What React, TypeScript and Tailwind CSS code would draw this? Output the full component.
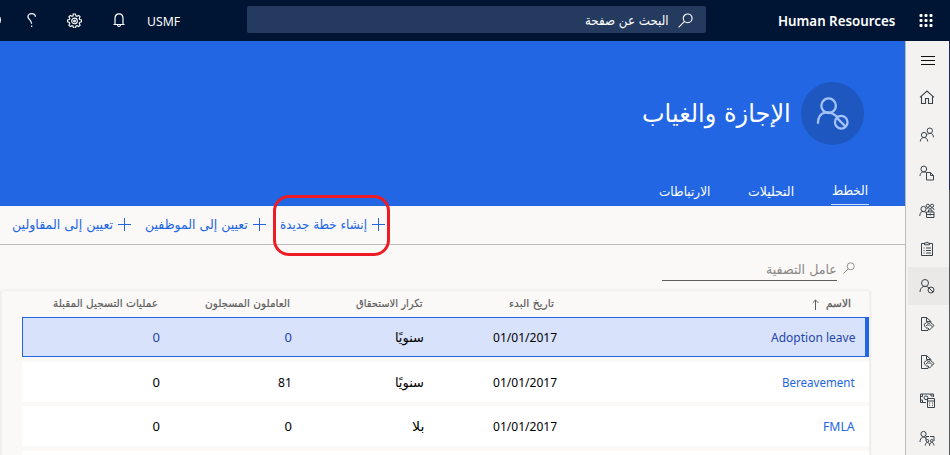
import { useLayoutEffect, useRef, useState } from 'react';
import type { ReactNode } from 'react';

const AR = "font-['DejaVu_Sans',sans-serif]";
const LAT = "font-['Noto_Sans','Open_Sans',sans-serif]";

/** Single line of text, condensed or widened to fill the given width. */
function Fit({ w, className = '', children }: { w: number; className?: string; children: ReactNode }) {
  const ref = useRef<HTMLSpanElement>(null);
  const [k, setK] = useState(1);
  useLayoutEffect(() => {
    const measure = () => {
      if (ref.current && ref.current.offsetWidth) setK(w / ref.current.offsetWidth);
    };
    measure();
    document.fonts?.ready.then(measure);
  }, [w]);
  return (
    <span className={`flex shrink-0 justify-start ${className}`} style={{ width: w }}>
      <span ref={ref} className="inline-block shrink-0 origin-right whitespace-nowrap" style={{ transform: `scaleX(${k})` }}>
        {children}
      </span>
    </span>
  );
}

function Svg({ className = 'size-4', box = '0 0 16 16', sw = 1, children }: { className?: string; box?: string; sw?: number; children: ReactNode }) {
  return (
    <svg className={`block shrink-0 ${className}`} viewBox={box} fill="none" stroke="currentColor" strokeWidth={sw}>
      {children}
    </svg>
  );
}

const Search = ({ className }: { className: string }) => (
  <Svg className={className} sw={1.200}>
    <circle cx="10.3" cy="5.7" r="4.7" />
    <path d="M7 9 .6 15.4" />
  </Svg>
);

const Doc = () => (
  <Svg>
    <path d="M9 14.500H2.500v-13h5l4.500 4v1M7.500 1.500v4h4" />
    <path d="m5 8.500 2.500-2 2.500 1 1.500-1 3.500 3-4.500 4.500-1.500-.5-3-3zM7 10l2-1.500 1 1 1-1 2.500 2.500M8.500 11.500l1.500 1.500" />
  </Svg>
);

const nav: { icon: ReactNode; active?: boolean }[] = [
  { icon: <Svg sw={1.100}><path d="M1 8.300 8 2l7 6.300M2.500 7.500v7h4v-5h3v5h4v-7" /></Svg> },
  {
    icon: (
      <Svg>
        <circle cx="5" cy="8" r="2.600" /><path d="M1.300 14.500c0-5.300 7.400-5.300 7.400 0" />
        <circle cx="10.800" cy="3.700" r="2.700" /><path d="M8.300 7.300c3-2 6.200-.5 6.200 3" />
      </Svg>
    ),
  },
  {
    icon: (
      <Svg>
        <circle cx="4.800" cy="4" r="2.900" /><path d="M1 11c0-4.500 4.500-5 6.500-3M7.500 7.500h4l3 3v4.500h-7zM11.500 7.500v3h3" />
      </Svg>
    ),
  },
  {
    icon: (
      <Svg>
        <circle cx="4.500" cy="6" r="2.600" /><path d="M.8 13c0-5 4-5.500 6-3.500" />
        <circle cx="8.800" cy="2.800" r="1.600" /><circle cx="13" cy="2.800" r="1.600" />
        <path d="M7.500 6c1.500-2 3-1 3.500 0 1-1.500 4-1.500 4 1M7.500 9h7.500v5.500H7.500zM9.500 9V7h3.500v2M7.500 11.500h7.500M11.300 10.500v2" />
      </Svg>
    ),
  },
  {
    icon: (
      <Svg>
        <path d="M5 2.500H2.500v12h11v-12H11M5.500 3.800V2h1.800c0-1.300 1.400-1.300 1.400 0h1.800v1.800zM4.500 7h1M7 7h5M4.500 9.500h1M7 9.500h5M4.500 12h1M7 12h5" />
      </Svg>
    ),
  },
  {
    active: true,
    icon: (
      <Svg>
        <circle cx="6" cy="5" r="3.500" /><path d="M1 14c0-6 6-7 9-4" />
        <circle cx="12" cy="12" r="3" /><path d="m10 10 4 4" />
      </Svg>
    ),
  },
  { icon: <Doc /> },
  { icon: <Doc /> },
  {
    icon: (
      <Svg>
        <path d="M7 10.500H1.500v-8.500h13V5M1.500 4.500H3.500V2M1.500 8h2v2.500M12 2v2h2.500" /><circle cx="7" cy="5.800" r="1.900" />
        <path d="M8.500 6.500h7v9h-7zM8.500 9h7M10.500 10.500v1M13.500 10.500v1M10.500 12.700v1M13.500 12.700v1" />
      </Svg>
    ),
  },
  {
    icon: (
      <Svg>
        <circle cx="4.500" cy="4" r="2.600" /><path d="M1 12c0-5 4-6 6-3.500M7 10.500v-4h3M11 6.500h4v4.500" />
        <circle cx="8.500" cy="10.800" r="1.300" /><circle cx="12.800" cy="10.800" r="1.300" />
        <path d="M6.300 15.500c0-4 4.300-4 4.300 0 0-4 4.300-4 4.300 0" />
      </Svg>
    ),
  },
];

const rows = [
  { name: 'Adoption leave', w: 84, freq: 'سنويًا', fw: 29, enrolled: '0', ew: 7, selected: true },
  { name: 'Bereavement', w: 73, freq: 'سنويًا', fw: 29, enrolled: '81', ew: 14, selected: false },
  { name: 'FMLA', w: 32, freq: 'بلا', fw: 12, enrolled: '0', ew: 7, selected: false },
];

const Plus = () => (
  <Svg className="size-[13px]" box="0 0 13 13"><path d="M6.500 0v13M0 6.500h13" /></Svg>
);

function Action({ label, w }: { label: string; w: number }) {
  return (
    <button className="flex items-center gap-[5px]">
      <span className="-mt-[2px]"><Plus /></span>
      <Fit w={w} className="text-[13px] leading-5">{label}</Fit>
    </button>
  );
}

export default function App() {
  return (
    <div dir="rtl" className={`flex h-[455px] w-[950px] flex-col overflow-hidden bg-[#faf9f8] text-black ${AR}`}>
      <header className="flex h-[41px] shrink-0 items-center overflow-hidden bg-[#001433] pb-px pr-[17px] text-white">
        <Svg className="h-[13px] w-[14px]" box="0 0 14 13">
          <g fill="currentColor" stroke="none">
            {[0, 5, 10].map((y) => [0.5, 5.500, 10.500].map((x) => <rect key={`${x}-${y}`} x={x} y={y} width="3" height="3" rx="1" />))}
          </g>
        </Svg>
        <Fit w={117} className={`mr-6 text-[14px] font-semibold ${LAT}`}>Human Resources</Fit>
        <div className="-mt-px mr-[72px] flex h-[27px] w-[459px] shrink-0 items-center rounded-[2px] bg-[#243a5e] pr-[13px]">
          <Search className="mt-[2px] size-[15px]" />
          <Fit w={84} className="mr-[9px] mt-[3px] text-[13px]">البحث عن صفحة</Fit>
        </div>
        <Fit w={33} className={`mr-[67px] mt-[3px] text-[13px] ${LAT}`}>USMF</Fit>
        <Svg className="mr-[22px] h-[15px] w-[12px]" box="0 0 12 15" sw={1.200}>
          <path d="M.5 11.500h11M2 11.500V5.500C2 -.7 10 -.7 10 5.500v6M4.500 12c.3 2 2.700 2 3 0" />
        </Svg>
        <Svg className="mr-[31px] size-[15px]" box="0 0 16 16" sw={1.200}>
          <path d="m6.600 1 .4 0h2l.5 2 1.200.5 1.800-1 1.500 1.500-1 1.800.5 1.200 2 .5v2l-2 .5-.5 1.200 1 1.800-1.500 1.500-1.800-1-1.200.5-.5 2H7l-.5-2-1.200-.5-1.800 1L2 13l1-1.800L2.500 10l-2-.5v-2l2-.5L3 5.800 2 4l1.500-1.500 1.800 1L6.500 3z" />
          <circle cx="8" cy="8.500" r="3" /><circle cx="8" cy="8.500" r="1" />
        </Svg>
        <Svg className="mr-[31px] h-[14px] w-[9px]" box="0 0 9 14" sw={1.300}>
          <path d="M8.400 3.700C8 -.3 1 -.3 1 3.700c0 3 3.600 3 3.600 7M4.600 12.500V14" />
        </Svg>
        <span className="mr-[26px] size-4 shrink-0 rounded-full border border-white" />
      </header>

      <div className="flex min-h-0 flex-1">
        <div className="flex w-px shrink-0 flex-col bg-[#53565c]">
          <div className="h-[149px] bg-[#1b2b57]" />
        </div>
        <nav className="flex w-[44px] shrink-0 flex-col border-l border-[#bdbbb9] bg-[#f3f2f1] text-[#38434b]">
          <div className="flex h-[37px] shrink-0 items-center justify-center pl-px pt-[2px] text-[#111]">
            <Svg className="h-[10px] w-[14px]" box="0 0 14 10"><path d="M0 .5h14M0 4.500h14M0 8.500h14" /></Svg>
          </div>
          {nav.map((n, i) => (
            <div key={i} className={`ml-[2px] flex h-[37.900px] shrink-0 items-center justify-center pr-[3px] ${n.active ? 'bg-[#eae9e8]' : ''}`}>
              {n.icon}
            </div>
          ))}
        </nav>

        <main className="flex min-w-0 flex-1 flex-col">
          <section className="flex h-[165px] shrink-0 flex-col bg-[#2266e3] text-white">
            <div className="mt-[41px] flex h-[63px] items-center pr-[41px]">
              <div className="flex size-[63px] items-center justify-center rounded-full bg-[#1e57c0] text-[#a3c2f8]">
                <Svg className="size-[33px]" box="0 0 34 34" sw={2.400}>
                  <circle cx="13" cy="9" r="7.500" /><path d="M2 27.500c0-14 12-14 20-7" />
                  <circle cx="26" cy="26" r="6.500" /><path d="m21.500 21.500 9 9" />
                </Svg>
              </div>
              <Fit w={149} className="mr-[10px] text-[25px]">الإجازة والغياب</Fit>
            </div>
            <div className="mt-auto flex items-end pr-[36px] text-[13px] leading-5">
              <div className="mb-px border-b border-white/80 px-px pb-[3px]"><Fit w={36}>الخطط</Fit></div>
              <div className="mr-[37px] pb-[4px]"><Fit w={46}>التحليلات</Fit></div>
              <div className="mr-[38px] pb-[4px]"><Fit w={51}>الارتباطات</Fit></div>
            </div>
          </section>

          <section className="relative flex h-[39px] shrink-0 items-center gap-[14px] border-b border-[#bcbbba] pr-[520px] text-[#2266e3]">
            <Action label="إنشاء خطة جديدة" w={87} />
            <Action label="تعيين إلى الموظفين" w={103} />
            <Action label="تعيين إلى المقاولين" w={101} />
            <span className="absolute -top-[11px] left-[273px] h-[61px] w-[117px] rounded-[16px] border-[3px] border-[#ed1c24]" />
          </section>

          <div className="mr-[50px] mt-[14px] flex h-[23px] shrink-0 items-start text-[#8a8886]">
            <span className="mt-[3px]"><Search className="size-[12px]" /></span>
            <div className="mr-[6px] h-[22px] w-[175px] border-b border-[#605e5c]">
              <Fit w={71} className="pt-px text-[13px] leading-5">عامل التصفية</Fit>
            </div>
          </div>

          <section className="ml-px mr-[35px] mt-[8px] flex min-h-0 flex-1 flex-col border border-b-0 border-[#f0efee] shadow-sm">
            <div className="ml-[20px] grid h-[26px] shrink-0 grid-cols-[297px_132px_132px_132px_1fr] items-center pr-[18px] text-[11px] leading-4 text-[#605e5c]">
              <span className="flex items-center gap-[7px]">
                <Fit w={25} className="[-webkit-text-stroke:0.300px]">الاسم</Fit>
                <Svg className="h-[11px] w-[7px]" box="0 0 7 11"><path d="M3.500 11V1M.7 3.800 3.500 1l2.800 2.800" /></Svg>
              </span>
              <Fit w={45} className="[-webkit-text-stroke:0.200px]">تاريخ البدء</Fit>
              <Fit w={67} className="[-webkit-text-stroke:0.200px]">تكرار الاستحقاق</Fit>
              <Fit w={85} className="[-webkit-text-stroke:0.200px]">العاملون المسجلون</Fit>
              <Fit w={105} className="[-webkit-text-stroke:0.200px]">عمليات التسجيل المقبلة</Fit>
            </div>
            <div className="ml-[20px] flex flex-col gap-[4.500px]">
              {rows.map((r) => (
                <div
                  key={r.name}
                  className={`grid h-10 shrink-0 grid-cols-[298px_133px_132px_132px_1fr] items-center text-[13px] ${LAT} ${
                    r.selected ? 'border border-r-[4px] border-[#2266e3] bg-[#d8e3fb] pr-[10px] pt-px' : 'bg-white pr-[14px] pt-[2px]'
                  }`}
                >
                  <Fit w={r.w} className={r.selected ? 'text-[#2446a8]' : 'text-[#2266e3]'}>{r.name}</Fit>
                  <Fit w={64}>01/01/2017</Fit>
                  <Fit w={r.fw} className={AR}>{r.freq}</Fit>
                  <Fit w={r.ew} className={r.selected ? 'text-[#2446a8]' : ''}>{r.enrolled}</Fit>
                  <Fit w={7} className={r.selected ? 'text-[#2446a8]' : ''}>0</Fit>
                </div>
              ))}
              <div className="h-10 shrink-0 bg-white" />
            </div>
          </section>
        </main>
      </div>
    </div>
  );
}
